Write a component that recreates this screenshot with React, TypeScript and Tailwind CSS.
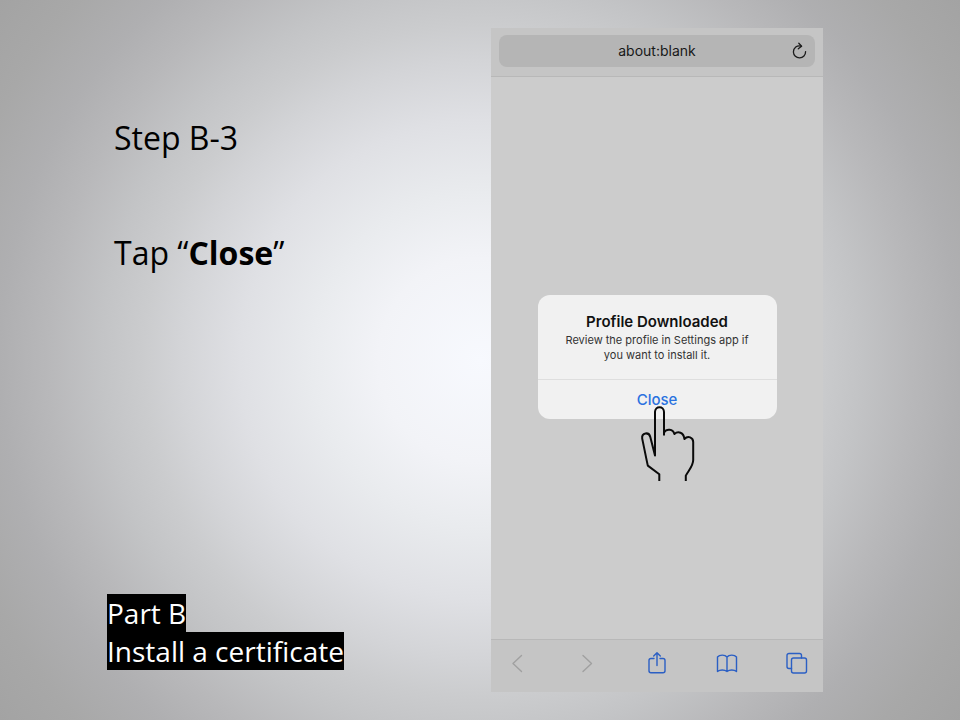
function ReloadIcon() {
  return (
    <svg viewBox="0 0 16 18" className="h-[18px] w-4" fill="none" stroke="#1b1b1b" strokeWidth="1.3" strokeLinecap="round" strokeLinejoin="round">
      <path d="M9.4 4.3C5 2.8 1.4 6 1.4 10A6.1 6.1 0 1 0 13.6 9.6" />
      <path d="M6.8 1.2L9.6 4.3L6.3 6.8" />
    </svg>
  );
}

function PointingHand() {
  return (
    <svg viewBox="0 0 56 76" className="pointer-events-none absolute left-[102px] top-[25px] h-[76px] w-14" fill="none" stroke="#0a0a0a" strokeWidth="2" strokeLinejoin="round">
      <path d="M19.3 76V69.3L7.8 60.6C5.7 51 4 42 2.2 33.6C1.4 27.4 9 26.6 10.3 32L15 50.5V7C15 0.6 24 0.6 24 7V30.5" />
      <path d="M24 27.5C26.5 23.4 33 23.6 34.4 29C38 25.8 43.7 27.2 44.4 34C48 30.2 53.2 32.6 53.2 37V55C53.2 61 48.6 65.4 45.8 70.6V76" />
    </svg>
  );
}

const tools = [
  { label: "Back", disabled: true, art: <path d="M16.5 4.5L8 12.5L16.5 20.5" stroke="#a0a0a0" /> },
  { label: "Forward", disabled: true, art: <path d="M8 4.5L16.5 12.5L8 20.5" stroke="#a0a0a0" /> },
  {
    label: "Share",
    disabled: false,
    art: (
      <>
        <path d="M9 7.5H6A2 2 0 0 0 4 9.5V19.8A2 2 0 0 0 6 21.8H18A2 2 0 0 0 20 19.8V9.5A2 2 0 0 0 18 7.5H15" />
        <path d="M12 14.500V2M8.7 5.1L12 1.8L15.3 5.1" />
      </>
    ),
  },
  {
    label: "Bookmarks",
    disabled: false,
    art: <path d="M12 6C10 3.500 4.500 3.500 2.5 6V20.500C5 18.500 9.5 18.500 12 20.500C14.5 18.500 19 18.500 21.5 20.500V6C19.5 3.500 14 3.500 12 6V20.500" />,
  },
  {
    label: "Tabs",
    disabled: false,
    art: (
      <>
        <path d="M6.500 17.5H4A2 2 0 0 1 2 15.5V4.5A2 2 0 0 1 4 2.5H14.500A2 2 0 0 1 16.500 4.5V7" />
        <rect x="6.500" y="7" width="15" height="15" rx="2" />
      </>
    ),
  },
];

export default function App() {
  return (
    <main className="flex min-h-screen bg-[radial-gradient(circle_at_50%_50%,#f7f9fe_0%,#f2f3f7_17%,#e9ebee_28%,#dfe0e4_40%,#d3d4d7_50%,#cbccce_56%,#c3c4c6_63%,#b8b8ba_72%,#afafb1_80%,#a8a8a8_90%,#a3a3a3_100%)] py-7 font-['Open_Sans',sans-serif] text-black">
      <section className="flex min-w-0 flex-1 flex-col justify-between pb-[22px] pl-[107px] pt-[88px]">
        <div className="flex flex-col gap-[71px] pl-[7px] text-[32px] leading-[44px]">
          <p>Step B-3</p>
          <p>
            Tap “<strong>Close</strong>”
          </p>
        </div>
        <h1 className="text-[28px] leading-[38px] text-white">
          <span className="bg-black">Part B</span>
          <br />
          <span className="bg-black">Install a certificate</span>
        </h1>
      </section>

      <section aria-label="Browser" className="mr-[137px] flex w-[332px] shrink-0 flex-col bg-[#cccccc] font-['Inter',sans-serif]">
        <header className="border-b border-[#b8b8b8] bg-[#c5c5c5] px-2 pb-[9px] pt-[7px]">
          <div className="flex h-8 items-center rounded-lg bg-[#b5b5b5] pl-[23px] pr-[7px]">
            <input aria-label="Address" defaultValue="about:blank" className="h-8 min-w-0 flex-1 bg-transparent pb-0.5 text-center text-[14px] text-[#181818] outline-none" />
            <button aria-label="Reload" className="flex w-4 justify-center">
              <ReloadIcon />
            </button>
          </div>
        </header>

        <div className="flex flex-1 items-center justify-center pb-[3px]">
          <div role="dialog" aria-labelledby="dialog-title" className="w-[239px] rounded-xl bg-[#f1f1f1] text-center">
            <div className="px-5 pb-4 pt-[17px]">
              <h2 id="dialog-title" className="text-[15px] font-semibold leading-5 text-[#111111]">Profile Downloaded</h2>
              <p className="pt-px text-[11px] leading-[15px] text-[#333333]">Review the profile in Settings app if you want to install it.</p>
            </div>
            <div className="relative border-t border-[#dedede]">
              <button className="h-[39px] w-full pt-0.5 text-[15px] font-medium text-[#2a72e0]">Close</button>
              <PointingHand />
            </div>
          </div>
        </div>

        <footer className="flex h-[53px] items-start justify-between border-t border-[#b8b8b8] bg-[#c5c5c5] px-[14px] pt-[11px]">
          {tools.map((tool) => (
            <button key={tool.label} aria-label={tool.label} disabled={tool.disabled}>
              <svg viewBox="0 0 24 24" className="size-6" fill="none" stroke="#2b5fc4" strokeWidth="1.4" strokeLinecap="round" strokeLinejoin="round">
                {tool.art}
              </svg>
            </button>
          ))}
        </footer>
      </section>
    </main>
  );
}
